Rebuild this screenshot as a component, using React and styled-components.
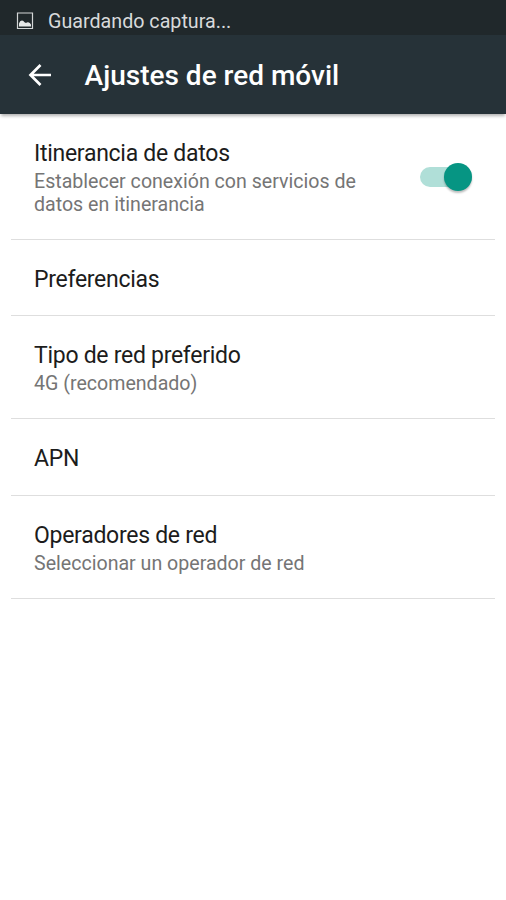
import React, { useState } from 'react';
import styled, { createGlobalStyle } from 'styled-components';

const GlobalStyle = createGlobalStyle`
  body {
    margin: 0px;
    background-color: #fff;
    font-family: Roboto, sans-serif;
  }
`;

const Screen = styled.div`
  width: 506px;
  height: 900px;
  overflow: hidden;
  background-color: #fff;
`;

const StatusBar = styled.div`
  display: flex;
  align-items: center;
  height: 35px;
  box-sizing: border-box;
  padding: 6px 0px 0px 16px;
  background-color: #20282b;
  color: #d8dadb;
  font-size: 19.7px;
  span {
    margin-left: 14px;
    padding-top: 1px;
    white-space: nowrap;
  }
`;

const AppBar = styled.header`
  display: flex;
  align-items: center;
  box-sizing: border-box;
  height: 79px;
  padding: 0px 0px 0px 28px;
  background-color: #263238;
  box-shadow: 0 3px 3px -1px rgba(0, 0, 0, 0.3);
  h1 {
    margin: 2px 0px 0px 32.6px;
    color: #fff;
    font-size: 28px;
    font-weight: 500;
    white-space: nowrap;
  }
`;

const BackButton = styled.button`
  display: flex;
  padding: 0px;
  border: none;
  background: none;
  cursor: pointer;
`;

const List = styled.main`
  padding: 0px 11px;
`;

const Row = styled.div`
  display: flex;
  align-items: center;
  justify-content: space-between;
  box-sizing: border-box;
  height: ${(props) => props.$height}px;
  padding: 0px 23px;
  border-bottom: 1px solid #dedede;
`;

const Title = styled.div`
  color: #1c1c1c;
  font-size: 23px;
  letter-spacing: -0.28px;
  line-height: 29px;
  padding-top: 2px;
  white-space: nowrap;
  &:only-child {
    padding-top: 3px;
  }
`;

const Summary = styled.div`
  color: #757575;
  font-size: 19.6px;
  line-height: 23px;
  white-space: pre-line;
  padding-top: 2px;
`;

const Switch = styled.button`
  display: flex;
  align-items: center;
  justify-content: ${(props) => (props.$on ? 'flex-end' : 'flex-start')};
  width: 52px;
  height: 20px;
  padding: 0px;
  border: none;
  border-radius: 10px;
  background-color: ${(props) => (props.$on ? '#b0dfd8' : '#b9b9b9')};
  cursor: pointer;
`;

const Thumb = styled.span`
  width: 28px;
  height: 28px;
  flex-shrink: 0;
  border-radius: 50%;
  background-color: ${(props) => (props.$on ? '#069583' : '#f1f1f1')};
  box-shadow: 0 2px 2px 0 rgba(0, 0, 0, 0.25);
`;

const settings = [
  {
    title: 'Itinerancia de datos',
    summary: 'Establecer conexión con servicios de\ndatos en itinerancia',
    height: 126,
    toggle: true,
  },
  { title: 'Preferencias', height: 76 },
  { title: 'Tipo de red preferido', summary: '4G (recomendado)', height: 103 },
  { title: 'APN', height: 77 },
  { title: 'Operadores de red', summary: 'Seleccionar un operador de red', height: 103 },
];

const PictureIcon = () => (
  <svg width="18" height="18" viewBox="0 0 18 18">
    <path d="M1.500 1h15v15.500h-15z" fill="none" stroke="#d3d6d7" strokeWidth="1.200" />
    <path
      d="M3 14.500v-3q.8-3 3-3 1.500 0 2.500 1.700l1.500.8q1-1 2.200-.8 1.800.3 2.800 2.300v2z"
      fill="#e6e8e8"
    />
  </svg>
);

const BackIcon = () => (
  <svg width="24" height="24" viewBox="0 0 24 24">
    <path d="M23 12H3M12.500 2L2.500 12l10 10" fill="none" stroke="#fff" strokeWidth="2.700" />
  </svg>
);

const App = () => {
  const [roaming, setRoaming] = useState(true);
  return (
    <Screen>
      <GlobalStyle />
      <StatusBar>
        <PictureIcon />
        <span>Guardando captura...</span>
      </StatusBar>
      <AppBar>
        <BackButton aria-label="Atrás">
          <BackIcon />
        </BackButton>
        <h1>Ajustes de red móvil</h1>
      </AppBar>
      <List>
        {settings.map((item) => (
          <Row key={item.title} $height={item.height}>
            <div>
              <Title>{item.title}</Title>
              {item.summary && <Summary>{item.summary}</Summary>}
            </div>
            {item.toggle && (
              <Switch
                role="switch"
                aria-checked={roaming}
                aria-label={item.title}
                $on={roaming}
                onClick={() => setRoaming(!roaming)}
              >
                <Thumb $on={roaming} />
              </Switch>
            )}
          </Row>
        ))}
      </List>
    </Screen>
  );
};

export default App;
